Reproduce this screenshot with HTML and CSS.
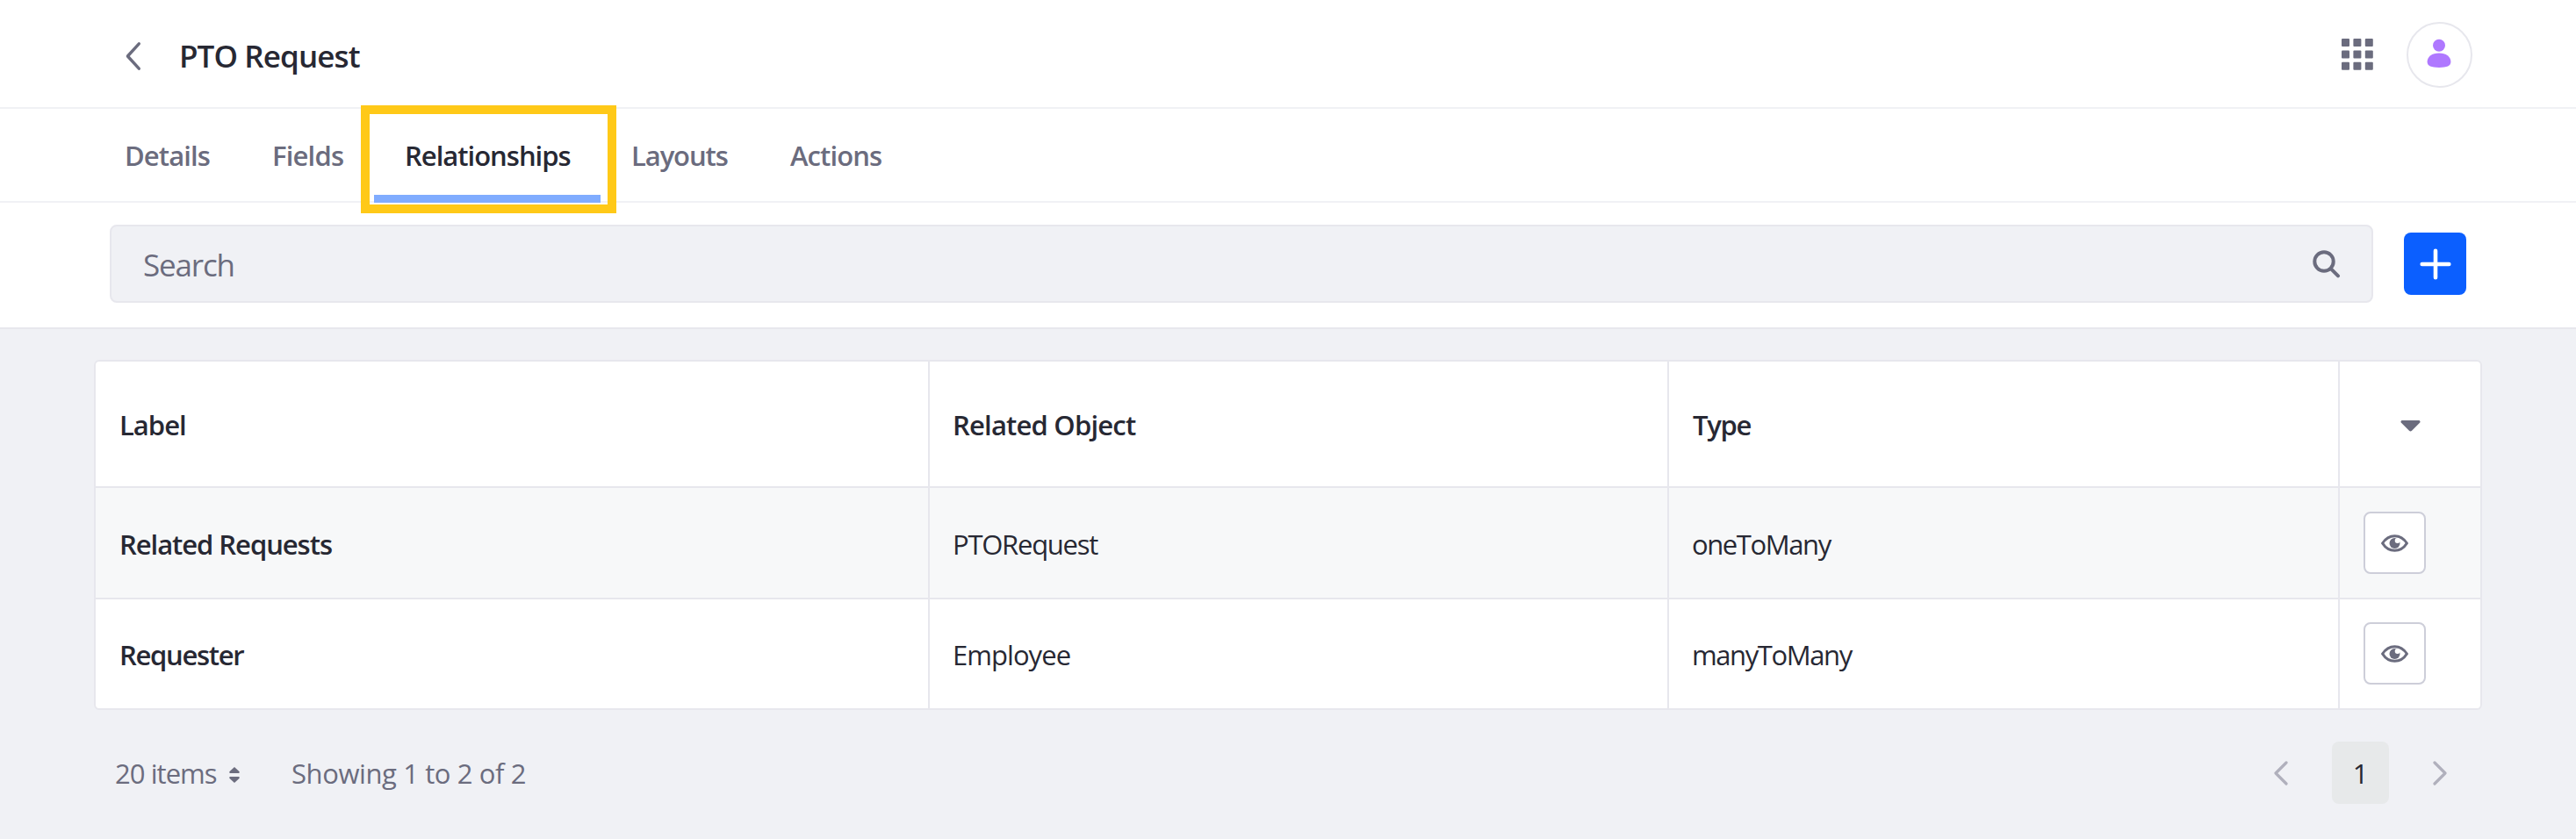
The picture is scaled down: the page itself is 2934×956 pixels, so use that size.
FILE: index.html
```
<!DOCTYPE html>
<html lang="en">
<head>
<meta charset="utf-8">
<title>PTO Request</title>
<link rel="stylesheet" href="styles.css">
</head>
<body>
<header class="header">
  <svg class="back" viewBox="0 0 20 34"><path d="M16.300 2.800L3.400 17L16.300 31.200"/></svg>
  <h1 class="title">PTO Request</h1>
  <svg class="apps" viewBox="0 0 36 36">
    <rect x="0" y="0" width="9" height="9" rx="1"/><rect x="13.400" y="0" width="9" height="9" rx="1"/><rect x="26.800" y="0" width="9" height="9" rx="1"/>
    <rect x="0" y="13.400" width="9" height="9" rx="1"/><rect x="13.400" y="13.400" width="9" height="9" rx="1"/><rect x="26.800" y="13.400" width="9" height="9" rx="1"/>
    <rect x="0" y="26.800" width="9" height="9" rx="1"/><rect x="13.400" y="26.800" width="9" height="9" rx="1"/><rect x="26.800" y="26.800" width="9" height="9" rx="1"/>
  </svg>
  <div class="avatar">
    <svg class="user" viewBox="0 0 28 34"><circle cx="14" cy="7.700" r="7"/><path d="M14 16.500C22 16.500 27.400 20.500 27.400 26.500C27.400 31 23 32.900 14 32.900S0.600 31 0.600 26.500C0.600 20.500 6 16.500 14 16.500Z"/></svg>
  </div>
</header>
<nav class="tabs">
  <a class="tab tab-details">Details</a>
  <a class="tab tab-fields">Fields</a>
  <a class="tab tab-relationships active">Relationships<span class="highlight"></span></a>
  <a class="tab tab-layouts">Layouts</a>
  <a class="tab tab-actions">Actions</a>
</nav>
<div class="toolbar">
  <div class="search">
    <span class="placeholder">Search</span>
    <svg class="magnifier" viewBox="0 0 32 32"><circle cx="13" cy="13" r="10.700"/><path d="M21 21.300L29 29.300"/></svg>
  </div>
  <button class="add"><svg class="plus" viewBox="0 0 36 36"><path d="M18 2.700V33.300M2.700 18H33.300"/></svg></button>
</div>
<main class="content">
  <div class="table">
    <div class="row head">
      <div class="cell t-label">Label</div>
      <div class="cell t-object">Related Object</div>
      <div class="cell t-type">Type</div>
      <div class="cell toggle"><svg class="caret" viewBox="0 0 23 13"><path d="M1.500 0H21.500Q23.300 1 22 2.800L13 11.800Q11.500 13.200 10 11.800L1 2.800Q-0.300 1 1.500 0Z"/></svg></div>
    </div>
    <div class="row striped">
      <div class="cell strong t-related">Related Requests</div>
      <div class="cell t-pto">PTORequest</div>
      <div class="cell t-many">oneToMany</div>
      <div class="cell action"><button class="view"><svg class="eye" viewBox="0 0 31 20"><path class="eye-line" d="M1.600 10C4.800 5 9.500 1.700 15.500 1.700S26.200 5 29.400 10C26.200 15 21.500 18.300 15.500 18.300S4.800 15 1.600 10Z"/><circle cx="15.500" cy="10" r="6"/><circle class="glint" cx="18.700" cy="7" r="3"/></svg></button></div>
    </div>
    <div class="row last">
      <div class="cell strong t-requester">Requester</div>
      <div class="cell t-employee">Employee</div>
      <div class="cell t-many">manyToMany</div>
      <div class="cell action"><button class="view"><svg class="eye" viewBox="0 0 31 20"><path class="eye-line" d="M1.600 10C4.800 5 9.500 1.700 15.500 1.700S26.200 5 29.400 10C26.200 15 21.500 18.300 15.500 18.300S4.800 15 1.600 10Z"/><circle cx="15.500" cy="10" r="6"/><circle class="glint" cx="18.700" cy="7" r="3"/></svg></button></div>
    </div>
  </div>
  <div class="pagination">
    <span class="per-page">20 items</span>
    <svg class="sort" viewBox="0 0 12 18"><path d="M6 0L11.700 5.200Q12 7 11 7H1Q0 7 0.300 5.200ZM6 18L11.700 12.800Q12 11 11 11H1Q0 11 0.300 12.800Z"/></svg>
    <span class="results">Showing 1 to 2 of 2</span>
    <svg class="page-arrow" viewBox="0 0 16 28"><path d="M14 2L2 14L14 26"/></svg>
    <span class="page">1</span>
    <svg class="page-arrow" viewBox="0 0 16 28"><path d="M2 2L14 14L2 26"/></svg>
  </div>
</main>
</body>
</html>
```
FILE: styles.css
```
* { box-sizing: border-box; }
body {
  margin: 0;
  height: 956px;
  overflow: hidden;
  background: #f0f1f5;
  color: #272833;
  font-family: "Open Sans", "Noto Sans", sans-serif;
  font-size: 31px;
  line-height: 44px;
}
svg { display: block; flex: none; }
button { padding: 0; display: flex; align-items: center; justify-content: center; }

.header {
  display: flex;
  align-items: center;
  height: 124px;
  padding: 6px 118px 0 142px;
  background: #fff;
  border-bottom: 2px solid #f0f1f5;
}
.back { width: 20px; height: 34px; fill: none; stroke: #6b6c7e; stroke-width: 3.4; stroke-linecap: round; stroke-linejoin: round; }
.title { margin: 0 auto 0 42px; font-size: 35px; font-weight: 550; letter-spacing: -0.9px; }
.apps { width: 36px; height: 36px; margin-right: 38px; fill: #6b6c7e; }
.avatar {
  display: flex;
  align-items: center;
  justify-content: center;
  width: 75px;
  height: 75px;
  border: 2px solid #e7e7ed;
  border-radius: 50%;
}
.user { width: 28px; height: 34px; margin: 0 1px 2px 0; fill: #af78ff; }
.apps, .avatar { margin-bottom: 4px; }

.tabs {
  display: flex;
  height: 107px;
  padding-left: 107px;
  background: #fff;
  border-bottom: 2px solid #f0f1f5;
  font-weight: 550;
  line-height: 107px;
  color: #6b6c7e;
}
.tab { padding-left: 35px; white-space: nowrap; }
.tab-details { width: 168px; letter-spacing: -0.9px; }
.tab-fields { width: 151px; letter-spacing: -0.8px; }
.tab-relationships { width: 258px; letter-spacing: -1px; }
.tab-layouts { width: 180px; letter-spacing: -1.1px; }
.tab-actions { padding-left: 36px; letter-spacing: -0.9px; }
.active { position: relative; height: 107px; color: #272833; border-bottom: 9px solid #80acff; }
.highlight { position: absolute; left: -15px; top: -4px; width: 291px; height: 123px; border: 10px solid #ffc918; }

.toolbar {
  display: flex;
  align-items: center;
  gap: 35px;
  height: 144px;
  padding: 0 125px 3px;
  background: #fff;
  border-bottom: 2px solid #e7e7ed;
}
.search {
  display: flex;
  align-items: center;
  justify-content: space-between;
  flex: 1;
  height: 89px;
  padding: 0 36px;
  background: #f0f1f5;
  border: 2px solid #e7e7ed;
  border-radius: 8px;
}
.placeholder { padding-top: 2px; font-size: 35px; letter-spacing: -1.15px; color: #6b6c7e; }
.magnifier { width: 32px; height: 32px; margin-right: -1px; fill: none; stroke: #6b6c7e; stroke-width: 4; stroke-linecap: round; }
.add { width: 71px; height: 71px; background: #0b5fff; border: 0; border-radius: 8px; }
.plus { width: 36px; height: 36px; stroke: #fff; stroke-width: 4.6; stroke-linecap: round; }

.content { padding: 35px 107px 0; }
.table { height: 399px; background: #fff; border: 2px solid #e7e7ed; border-radius: 6px; overflow: hidden; }
.row { display: grid; grid-template-columns: 948px 842px 764px 1fr; height: 127px; border-bottom: 2px solid #e7e7ed; }
.head { height: 144px; font-weight: 550; }
.striped { background: #f7f8f9; }
.last { height: 124px; border-bottom: 0; }
.cell { display: flex; align-items: center; padding: 2px 0 0 26px; border-left: 2px solid #e7e7ed; white-space: nowrap; }
.cell:first-child { padding-left: 27px; border-left: 0; }
.strong { font-weight: 550; }
.t-label { letter-spacing: -1px; }
.t-object { letter-spacing: -0.8px; }
.t-type { letter-spacing: -1.3px; padding-left: 27px; }
.t-related { letter-spacing: -1.05px; }
.t-requester { letter-spacing: -1.3px; }
.t-pto { letter-spacing: -1.25px; }
.t-employee { letter-spacing: -0.95px; }
.t-many { letter-spacing: -1.4px; }
.toggle { justify-content: center; padding: 4px 0 0; }
.caret { width: 23px; height: 13px; fill: #6b6c7e; }
.action { padding: 0 0 0 27px; }
.view { width: 71px; height: 71px; background: #fff; border: 2px solid #cdced9; border-radius: 8px; }
.last .view { margin-bottom: 1px; }
.eye { width: 31px; height: 20px; fill: #6b6c7e; }
.eye-line { fill: none; stroke: #6b6c7e; stroke-width: 3.1; stroke-linejoin: round; }
.glint { fill: #fff; }

.pagination { display: flex; align-items: center; height: 71px; margin-top: 36px; padding: 0 40px 0 24px; color: #6b6c7e; }
.per-page { width: 130px; padding-top: 1px; letter-spacing: -0.95px; }
.sort { width: 12px; height: 18px; margin-top: 4px; fill: #6b6c7e; }
.results { margin: 0 auto 0 59px; padding-top: 1px; letter-spacing: -0.4px; }
.page-arrow { width: 16px; height: 28px; fill: none; stroke: #b0b0bc; stroke-width: 3.2; stroke-linecap: round; stroke-linejoin: round; }
.page { width: 65px; height: 71px; margin: 0 50px; border-radius: 8px; background: #e7e9ea; color: #272833; line-height: 73px; text-align: center; }
```
